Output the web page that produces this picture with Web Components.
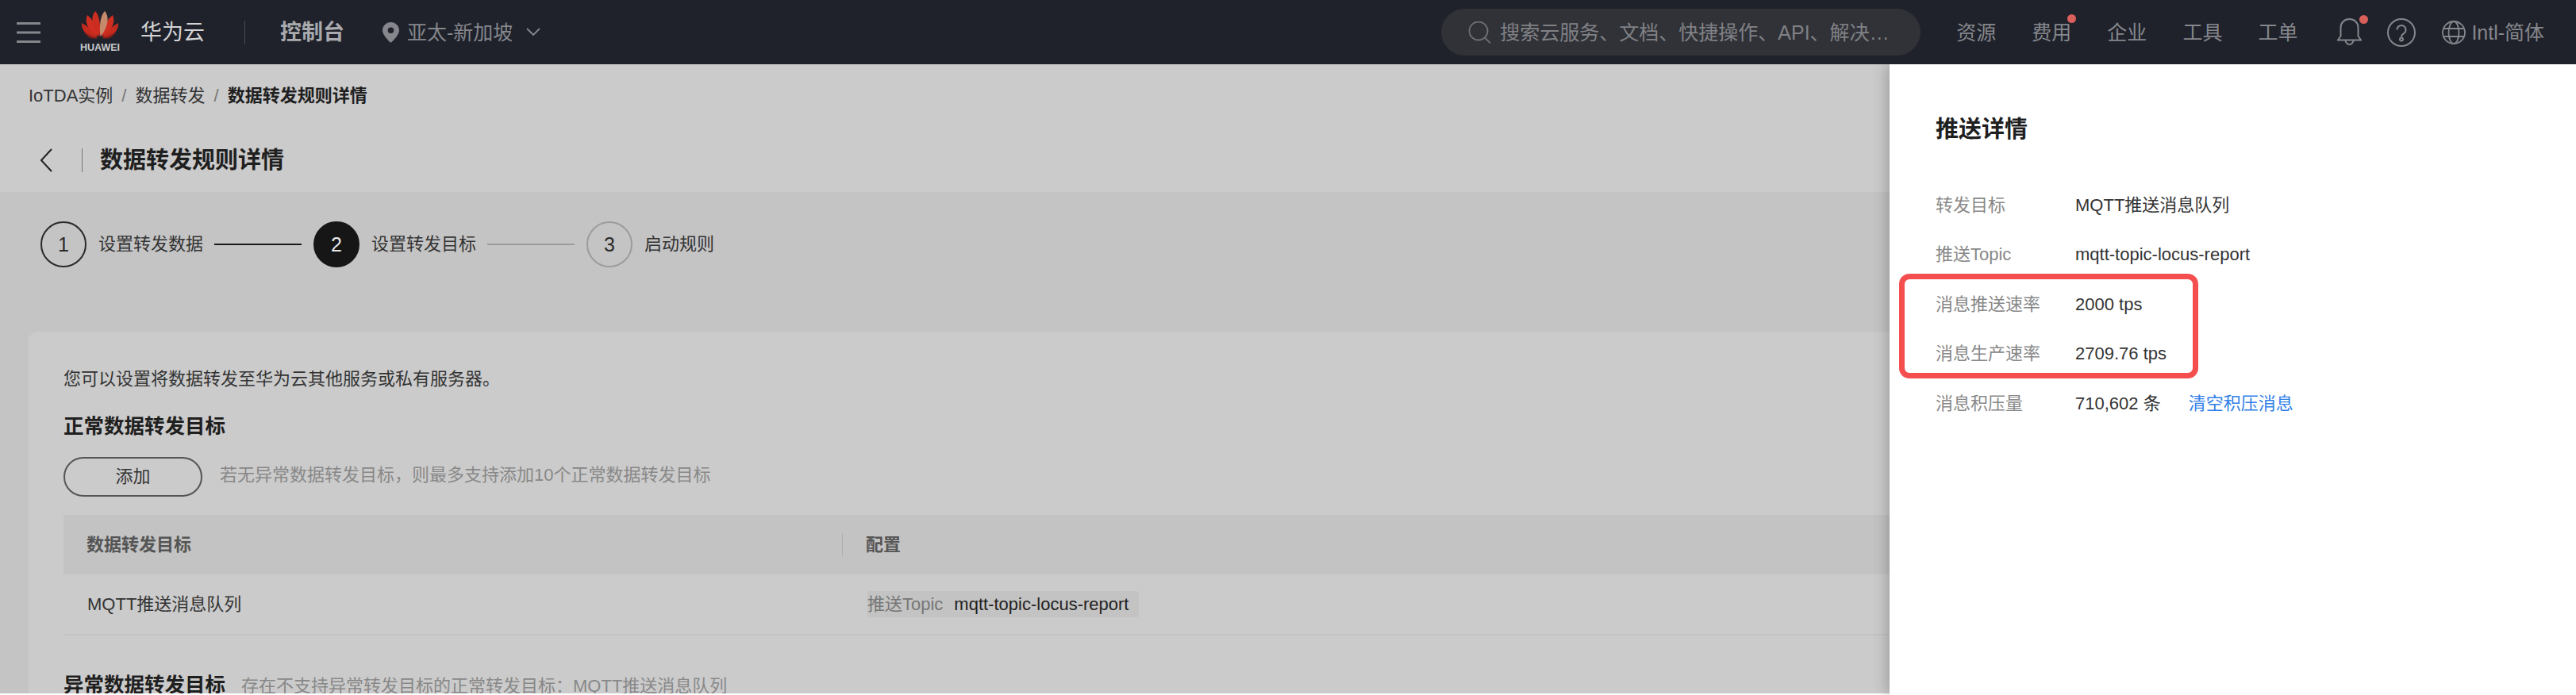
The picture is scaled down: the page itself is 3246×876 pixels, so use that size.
<!DOCTYPE html>
<html lang="zh">
<head>
<meta charset="utf-8">
<title>数据转发规则详情</title>
<style>
  html, body { margin: 0; background: #fff; }
  body {
    width: 3246px; height: 876px; overflow: hidden; position: relative;
    font-family: "Liberation Sans", "Noto Sans CJK SC", sans-serif;
    font-size: 22px; line-height: 30px; color: #333;
  }
</style>
</head>
<body>
<hw-topbar></hw-topbar>
<hw-page>
  <hw-breadcrumb></hw-breadcrumb>
  <hw-title>数据转发规则详情</hw-title>
  <hw-content>
    <hw-steps>
      <hw-step num="1" state="done">设置转发数据</hw-step>
      <hw-step num="2" state="active">设置转发目标</hw-step>
      <hw-step num="3" state="todo" last>启动规则</hw-step>
    </hw-steps>
    <hw-card></hw-card>
  </hw-content>
</hw-page>
<hw-drawer heading="推送详情">
  <hw-row label="转发目标">MQTT推送消息队列</hw-row>
  <hw-row label="推送Topic">mqtt-topic-locus-report</hw-row>
  <hw-row label="消息推送速率">2000 tps</hw-row>
  <hw-row label="消息生产速率">2709.76 tps</hw-row>
  <hw-row label="消息积压量">710,602 条<a slot="extra">清空积压消息</a></hw-row>
</hw-drawer>

<script>
class HwTopbar extends HTMLElement {
  constructor() {
    super();
    this.attachShadow({ mode: 'open' });
    this.shadowRoot.innerHTML = `
      <style>
        :host { display: flex; align-items: center; height: 81px; background: #1f222b; color: #85878c; font-size: 25px; position: relative; z-index: 2; }
        svg { display: block; flex: none; }
        .menu { margin-left: 21px; }
        .logo { margin-left: 50px; width: 50px; display: flex; flex-direction: column; align-items: center; }
        .logo span { font-size: 12.5px; font-weight: 700; color: #c9c9cb; line-height: 13px; margin-top: 4px; white-space: nowrap; }
        .brand { margin-left: 26px; font-size: 27px; color: #d4d4d6; }
        .sep { margin-left: 50px; width: 1px; height: 30px; background: #4a4d55; }
        .console { margin-left: 44px; font-size: 27px; font-weight: 700; color: #a9aaad; }
        .pin { margin-left: 48px; }
        .region { margin-left: 10px; white-space: nowrap; }
        .chev { margin-left: 17px; }
        .search { margin-left: 1135px; width: 604px; height: 59px; border-radius: 30px; background: #303238; display: flex; align-items: center; padding-left: 34px; box-sizing: border-box; flex: none; }
        .search span { margin-left: 10px; white-space: nowrap; color: #808185; }
        nav { display: flex; margin-left: 45px; gap: 45px; }
        nav a { position: relative; white-space: nowrap; }
        .dot { position: absolute; width: 11px; height: 11px; border-radius: 50%; background: #d9605a; }
        nav .dot { right: -6px; top: -8px; }
        .bell { margin-left: 50px; position: relative; }
        .bell .dot { right: -8px; top: -4px; }
        .help { margin-left: 32px; }
        .globe { margin-left: 33px; }
        .lang { margin-left: 7px; white-space: nowrap; }
      </style>
      <svg class="menu" width="30" height="26" viewBox="0 0 30 26" fill="#85878c"><rect width="30" height="3"/><rect y="11.5" width="30" height="3"/><rect y="23" width="30" height="3"/></svg>
      <div class="logo">
        <svg width="48" height="36" viewBox="0 0 48 36">
          <path fill="#8f1f17" d="M3 24C9 24 15 28 21 34 14 36 7 33 3 24Z"/>
          <path fill="#8f1f17" d="M45 24C39 24 33 28 27 34 34 36 41 33 45 24Z"/>
          <path fill="#c42a1e" d="M1 15C9 19 16 26 21 33 10 31 0 26 1 15Z"/>
          <path fill="#c42a1e" d="M47 15C39 19 32 26 27 33 38 31 48 26 47 15Z"/>
          <path fill="#cf2e20" d="M8 5C15 10 20 21 22 32 13 27 3 17 8 5Z"/>
          <path fill="#cf2e20" d="M40 5C33 10 28 21 26 32 35 27 45 17 40 5Z"/>
          <path fill="#cc2d20" d="M18 0C24 6 25 20 23.500 32 17 25 10 9 18 0Z"/>
          <path fill="#c58a6c" d="M30 0C24 6 23 20 24.500 32 31 25 38 9 30 0Z"/>
        </svg>
        <span>HUAWEI</span>
      </div>
      <div class="brand">华为云</div>
      <div class="sep"></div>
      <div class="console">控制台</div>
      <svg class="pin" width="21" height="26" viewBox="0 0 21 26"><path fill="#85878c" fill-rule="evenodd" d="M10.5 0C4.7 0 0 4.6 0 10.3 0 17 10.5 26 10.5 26S21 17 21 10.3C21 4.6 16.300 0 10.500 0ZM10.500 6.500A3.800 3.800 0 1 1 10.500 14.100 3.800 3.800 0 0 1 10.500 6.500Z"/></svg>
      <div class="region">亚太-新加坡</div>
      <svg class="chev" width="18" height="11" viewBox="0 0 18 11" fill="none" stroke="#85878c" stroke-width="1.800"><path d="M1 1l8 8 8-8"/></svg>
      <div class="search">
        <svg width="30" height="28" viewBox="0 0 30 28" fill="none" stroke="#6f7074" stroke-width="1.800"><circle cx="13" cy="12" r="11.500"/><path d="M21 20.500l7 7"/></svg>
        <span>搜索云服务、文档、快捷操作、API、解决…</span>
      </div>
      <nav>
        <a>资源</a>
        <a>费用<i class="dot"></i></a>
        <a>企业</a>
        <a>工具</a>
        <a>工单</a>
      </nav>
      <div class="bell">
        <svg width="31" height="35" viewBox="0 0 31 35" fill="none" stroke="#85878c" stroke-width="2"><path d="M1 27.500h29l-3.500-5V11.500C26.500 5.500 21.500 1 15.500 1S4.500 5.500 4.500 11.500V22.500Z"/><path d="M10.500 27.500a5 5.500 0 0 0 10 0"/></svg>
        <i class="dot"></i>
      </div>
      <svg class="help" width="36" height="36" viewBox="0 0 36 36" fill="none" stroke="#85878c" stroke-width="2"><circle cx="18" cy="18" r="17"/><path d="M12.500 14.500a5.500 5.500 0 1 1 8.500 4.600c-2 1.300-3 2.300-3 4.400"/><circle cx="18" cy="26.500" r="2"/></svg>
      <svg class="globe" width="30" height="30" viewBox="0 0 30 30" fill="none" stroke="#85878c" stroke-width="1.800"><circle cx="15" cy="15" r="14"/><ellipse cx="15" cy="15" rx="6.500" ry="14"/><path d="M2 10h26M2 20h26"/></svg>
      <div class="lang">Intl-简体</div>
    `;
  }
}

class HwPage extends HTMLElement {
  constructor() {
    super();
    this.attachShadow({ mode: 'open' }).innerHTML = `
      <style>
        :host { display: flex; flex-direction: column; height: 793px; overflow: hidden; background: #cbcbcb; }
      </style>
      <slot></slot>`;
  }
}

class HwBreadcrumb extends HTMLElement {
  constructor() {
    super();
    this.attachShadow({ mode: 'open' }).innerHTML = `
      <style>
        :host { display: flex; align-items: center; height: 80px; padding-left: 36px; color: #333; white-space: nowrap; flex: none; }
        i { font-style: normal; color: #777; margin: 0 11px; }
        b { color: #1f1f1f; }
      </style>
      <span>IoTDA实例</span><i>/</i><span>数据转发</span><i>/</i><b>数据转发规则详情</b>`;
  }
}

class HwTitle extends HTMLElement {
  constructor() {
    super();
    this.attachShadow({ mode: 'open' }).innerHTML = `
      <style>
        :host { display: flex; align-items: center; height: 81px; padding-left: 50px; flex: none; }
        svg { display: block; }
        .sep { width: 1px; height: 30px; background: #777; margin: 0 22px 0 37px; }
        h1 { margin: 0; font-size: 29px; line-height: 36px; font-weight: 700; color: #1f1f1f; }
      </style>
      <svg width="16" height="30" viewBox="0 0 16 30" fill="none" stroke="#222" stroke-width="2"><path d="M15 1L2 15l13 14"/></svg>
      <div class="sep"></div>
      <h1><slot></slot></h1>`;
  }
}

class HwContent extends HTMLElement {
  constructor() {
    super();
    this.attachShadow({ mode: 'open' }).innerHTML = `
      <style>
        :host { display: block; flex: 1; background: #c4c4c4; padding: 37px 36px 0; }
      </style>
      <slot></slot>`;
  }
}

class HwSteps extends HTMLElement {
  constructor() {
    super();
    this.attachShadow({ mode: 'open' }).innerHTML = `
      <style>
        :host { display: flex; height: 58px; margin: 0 0 81px 15px; }
      </style>
      <slot></slot>`;
  }
}

class HwStep extends HTMLElement {
  constructor() {
    super();
    const state = this.getAttribute('state');
    const circle = {
      done: 'border: 2px solid #2a2a2a; color: #2a2a2a;',
      active: 'background: #161616; border: 2px solid #161616; color: #e8e8e8;',
      todo: 'border: 2px solid #9c9c9c; color: #2a2a2a;'
    }[state];
    const line = state === 'done' ? '#1a1a1a' : '#9c9c9c';
    this.attachShadow({ mode: 'open' }).innerHTML = `
      <style>
        :host { display: flex; align-items: center; white-space: nowrap; color: #333; }
        .num { width: 58px; height: 58px; box-sizing: border-box; border-radius: 50%; display: flex; align-items: center; justify-content: center; font-size: 25px; ${circle} }
        .label { margin-left: 15px; }
        .line { width: 110px; height: 2px; background: ${line}; margin: 0 15px 0 14px; }
      </style>
      <div class="num">${this.getAttribute('num')}</div>
      <div class="label"><slot></slot></div>
      ${this.hasAttribute('last') ? '' : '<div class="line"></div>'}`;
  }
}

class HwCard extends HTMLElement {
  constructor() {
    super();
    this.attachShadow({ mode: 'open' }).innerHTML = `
      <style>
        :host { display: block; background: #cbcbcb; border-radius: 12px 12px 0 0; padding: 45px 44px 0; height: 500px; box-sizing: border-box; white-space: nowrap; }
        .intro { line-height: 30px; color: #333; }
        h2 { margin: 27px 0 0; font-size: 25.5px; line-height: 34px; font-weight: 700; color: #1f1f1f; }
        .tools { display: flex; align-items: center; margin-top: 22px; height: 50px; }
        button { width: 175px; height: 50px; border: 2px solid #555; border-radius: 25px; background: none; font: inherit; color: #333; padding: 0; }
        .hint { margin-left: 22px; color: #888; margin-top: -4px; }
        .thead, .tbody { display: grid; grid-template-columns: 981px 1fr; align-items: center; }
        .thead { margin-top: 23px; height: 75px; background: #c3c3c3; font-weight: 700; color: #555; }
        .tbody { height: 75px; border-bottom: 2px solid #c3c3c3; color: #333; }
        .c1 { padding-left: 29px; }
        .tbody .c1 { padding-left: 30px; }
        .thead .c2 { border-left: 1px solid #aeaeae; padding-left: 29px; line-height: 29px; }
        .tag { display: inline-flex; gap: 14px; align-items: center; height: 33px; margin-left: 32px; padding-right: 13px; background: #c3c3c3; border-radius: 3px; color: #222; }
        .tag span { color: #777; }
        .abnormal { display: flex; align-items: baseline; margin-top: 45px; }
        .abnormal h2 { margin: 0; }
        .abnormal span { margin-left: 20px; color: #888; }
      </style>
      <div class="intro">您可以设置将数据转发至华为云其他服务或私有服务器。</div>
      <h2>正常数据转发目标</h2>
      <div class="tools">
        <button>添加</button>
        <div class="hint">若无异常数据转发目标，则最多支持添加10个正常数据转发目标</div>
      </div>
      <div class="thead"><div class="c1">数据转发目标</div><div class="c2">配置</div></div>
      <div class="tbody">
        <div class="c1">MQTT推送消息队列</div>
        <div><div class="tag"><span>推送Topic</span>mqtt-topic-locus-report</div></div>
      </div>
      <div class="abnormal"><h2>异常数据转发目标</h2><span>存在不支持异常转发目标的正常转发目标：MQTT推送消息队列</span></div>`;
  }
}

class HwDrawer extends HTMLElement {
  constructor() {
    super();
    this.attachShadow({ mode: 'open' }).innerHTML = `
      <style>
        :host { display: block; position: absolute; top: 81px; right: 0; width: 865px; height: 795px; background: #fff; box-shadow: -4px 0 16px rgba(0,0,0,.22); box-sizing: border-box; padding: 62px 0 0 58px; }
        h3 { margin: 0 0 44.5px; font-size: 29px; line-height: 40px; font-weight: 700; color: #1f1f1f; }
        .mark { position: absolute; left: 12px; top: 264px; width: 377px; height: 132px; box-sizing: border-box; border: 7px solid #f44e4e; border-radius: 13px; }
      </style>
      <h3>${this.getAttribute('heading')}</h3>
      <slot></slot>
      <div class="mark"></div>`;
  }
}

class HwRow extends HTMLElement {
  constructor() {
    super();
    this.attachShadow({ mode: 'open' }).innerHTML = `
      <style>
        :host { display: flex; align-items: center; height: 62.5px; white-space: nowrap; color: #333; }
        .label { width: 176px; color: #888; flex: none; }
        ::slotted(a) { margin-left: 35px; color: #2f80e8; }
      </style>
      <div class="label">${this.getAttribute('label')}</div>
      <div><slot></slot></div>
      <slot name="extra"></slot>`;
  }
}

customElements.define('hw-topbar', HwTopbar);
customElements.define('hw-page', HwPage);
customElements.define('hw-breadcrumb', HwBreadcrumb);
customElements.define('hw-title', HwTitle);
customElements.define('hw-content', HwContent);
customElements.define('hw-steps', HwSteps);
customElements.define('hw-step', HwStep);
customElements.define('hw-card', HwCard);
customElements.define('hw-drawer', HwDrawer);
customElements.define('hw-row', HwRow);
</script>
</body>
</html>
